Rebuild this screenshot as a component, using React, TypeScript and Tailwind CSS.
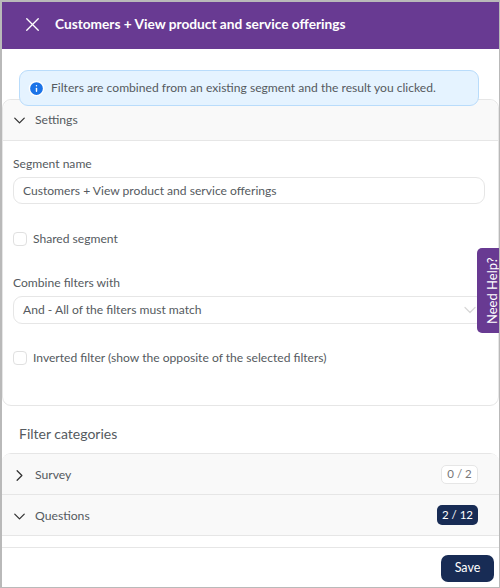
import React from 'react';
import { ChevronDown, ChevronRight, Info, X } from 'lucide-react';

const AccordionRow: React.FC<{ label: string; open?: boolean; badge: React.ReactNode }> = ({ label, open, badge }) => (
  <div className="flex h-[41px] items-center justify-between border-b border-[#e6e6e6] bg-[#f9f9f9] pr-[21px] pl-[8px]">
    <div className="flex items-center pt-[2px]">
      {open ? (
        <ChevronDown className="h-[19px] w-[19px] text-[#333333]" strokeWidth={1.6} />
      ) : (
        <ChevronRight className="h-[19px] w-[19px] text-[#333333]" strokeWidth={1.6} />
      )}
      <span className="ml-[6px] text-[12.2px] text-[#555a60]">{label}</span>
    </div>
    {badge}
  </div>
);

export default function App() {
  return (
    <div className="relative flex h-[588px] w-[500px] flex-col overflow-hidden border-t-2 border-r border-b border-l-2 border-[#b9b9b9] bg-white font-['Lato','Liberation_Sans',sans-serif]">
      {/* header */}
      <div className="flex h-[47px] shrink-0 items-center bg-[#683a92] pb-[3px] pl-[19px] text-white">
        <X className="h-[23px] w-[23px]" strokeWidth={1.4} />
        <h1 className="ml-[11px] text-[13.7px] font-bold">Customers + View product and service offerings</h1>
      </div>

      {/* alert sits over the top of the settings card */}
      <div className="relative z-10 mr-[20px] ml-[17px] mt-[21px] flex h-[36px] shrink-0 items-center rounded-[9px] border border-[#b9dcfb] bg-[#e5f3ff] pl-[8px]">
        <Info className="h-[17px] w-[17px] fill-[#1a73e8] text-white" strokeWidth={2} />
        <span className="ml-[6px] text-[12.1px] text-[#555a60]">
          Filters are combined from an existing segment and the result you clicked.
        </span>
      </div>

      {/* settings */}
      <div className="-mt-[7px] flex h-[307px] shrink-0 flex-col rounded-[9px] border border-[#e6e6e6]">
        <div className="flex h-[41px] shrink-0 items-center rounded-t-[9px] border-b border-[#e6e6e6] bg-[#f9f9f9] pl-[7px]">
          <ChevronDown className="h-[19px] w-[19px] text-[#333333]" strokeWidth={1.6} />
          <span className="ml-[6px] text-[12.2px] text-[#555a60]">Settings</span>
        </div>
        <div className="flex flex-col pr-[13px] pl-[10px] pt-[14px] text-[12.1px] text-[#555a60]">
          <label className="leading-[18px]">Segment name</label>
          <div className="mt-[4px] flex h-[27px] items-center rounded-[9px] border border-[#e6e6e6] pt-[2px] pl-[9px]">
            Customers + View product and service offerings
          </div>
          <label className="mt-[26px] flex items-center leading-[18px]">
            <span className="h-[14px] w-[14px] rounded-[4px] border border-[#e0e0e0] bg-white" />
            <span className="ml-[6px]">Shared segment</span>
          </label>
          <label className="mt-[26px] leading-[18px]">Combine filters with</label>
          <div className="mt-[4px] flex h-[28px] items-center justify-between rounded-[9px] border border-[#e6e6e6] pr-[4px] pl-[9px]">
            <span>And - All of the filters must match</span>
            <ChevronDown className="h-[20px] w-[20px] text-[#d8d8d8]" strokeWidth={1.5} />
          </div>
          <label className="mt-[25px] flex items-center leading-[18px]">
            <span className="h-[14px] w-[14px] rounded-[4px] border border-[#e0e0e0] bg-white" />
            <span className="ml-[6px]">Inverted filter (show the opposite of the selected filters)</span>
          </label>
        </div>
      </div>

      {/* filter categories */}
      <h2 className="ml-[17px] mt-[18px] shrink-0 text-[14px] leading-[20px] text-[#555a60]">Filter categories</h2>
      <div className="mt-[9px] flex-1 overflow-hidden rounded-t-[9px] border-t border-[#e6e6e6]">
        <AccordionRow
          label="Survey"
          badge={
            <span className="flex h-[19px] w-[37px] items-center justify-center rounded-[5px] border border-[#e6e6e6] bg-white text-[11.5px] text-[#777777]">
              0 / 2
            </span>
          }
        />
        <AccordionRow
          label="Questions"
          open
          badge={
            <span className="flex h-[20px] w-[41px] items-center justify-center rounded-[5px] bg-[#182c55] text-[11.5px] text-white">
              2 / 12
            </span>
          }
        />
      </div>

      {/* footer */}
      <div className="flex h-[40px] shrink-0 items-start justify-end border-t border-[#e6e6e6] pr-[5px] pt-[7px]">
        <button className="flex h-[27px] w-[53px] items-center justify-center rounded-[7px] bg-[#182c55] text-[12.5px] text-white">
          Save
        </button>
      </div>

      {/* help tab */}
      <div className="absolute top-[246px] right-0 flex h-[85px] w-[22px] items-center justify-center rounded-l-[5px] bg-[#683a92] pl-[11px]">
        <span className="-rotate-90 whitespace-nowrap text-[13px] text-white">Need Help?</span>
      </div>
    </div>
  );
}
